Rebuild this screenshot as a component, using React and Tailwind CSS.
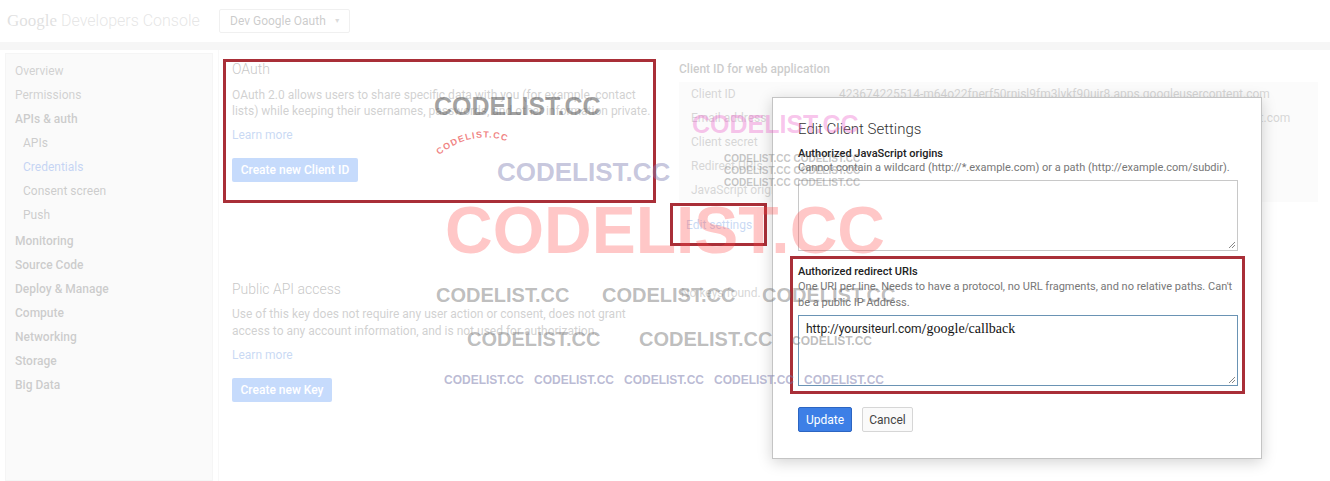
import React from "react";

const sideItems = [
    { label: "Overview", kind: "top" },
    { label: "Permissions", kind: "top" },
    { label: "APIs & auth", kind: "head" },
    { label: "APIs", kind: "sub" },
    { label: "Credentials", kind: "active" },
    { label: "Consent screen", kind: "sub" },
    { label: "Push", kind: "sub" },
    { label: "Monitoring", kind: "head", gap: true },
    { label: "Source Code", kind: "head" },
    { label: "Deploy & Manage", kind: "head" },
    { label: "Compute", kind: "head" },
    { label: "Networking", kind: "head" },
    { label: "Storage", kind: "head" },
    { label: "Big Data", kind: "head" },
];

const clientRows = [
    ["Client ID", "423674225514-m64o22fnerf50rnisl9fm3lvkf90uir8.apps.googleusercontent.com"],
    ["Email address", "423674225514-m64o22fnerf50rnisl9fm3lvkf90uir8@developer.gserviceaccount.com"],
    ["Client secret", "Xk3fPq9aLm2Vn7RtB1cZ8wYd"],
    ["Redirect URIs", "http://yoursiteurl.com/google/callback"],
    ["JavaScript origins", "none"],
];

// watermark stamps sitting on top of the screenshot
const marks = [
    { x: 434, y: 94, cls: "text-[25px] text-[rgba(70,70,70,0.5)]" },
    { x: 497, y: 159, cls: "text-[26px] text-[rgba(130,130,180,0.45)]" },
    { x: 692, y: 112, cls: "text-[25px] text-[rgba(235,90,200,0.35)]" },
    { x: 445, y: 197, cls: "text-[66px] text-[rgba(255,70,70,0.3)]" },
    { x: 724, y: 154, cls: "text-[10px] text-[rgba(110,110,110,0.4)]", text: "CODELIST.CC CODELIST.CC" },
    { x: 724, y: 166, cls: "text-[10px] text-[rgba(110,110,110,0.4)]", text: "CODELIST.CC CODELIST.CC" },
    { x: 724, y: 178, cls: "text-[10px] text-[rgba(110,110,110,0.4)]", text: "CODELIST.CC CODELIST.CC" },
    { x: 436, y: 285, cls: "text-[20px] text-[rgba(110,110,110,0.45)]" },
    { x: 602, y: 285, cls: "text-[20px] text-[rgba(110,110,110,0.45)]" },
    { x: 762, y: 285, cls: "text-[20px] text-[rgba(110,110,110,0.45)]" },
    { x: 467, y: 329, cls: "text-[20px] text-[rgba(110,110,110,0.45)]" },
    { x: 639, y: 329, cls: "text-[20px] text-[rgba(110,110,110,0.45)]" },
    { x: 792, y: 335, cls: "text-[12px] text-[rgba(110,110,110,0.45)]" },
    { x: 444, y: 374, cls: "text-[12px] text-[rgba(120,120,170,0.5)]" },
    { x: 534, y: 374, cls: "text-[12px] text-[rgba(120,120,170,0.5)]" },
    { x: 624, y: 374, cls: "text-[12px] text-[rgba(120,120,170,0.5)]" },
    { x: 714, y: 374, cls: "text-[12px] text-[rgba(120,120,170,0.5)]" },
    { x: 804, y: 374, cls: "text-[12px] text-[rgba(120,120,170,0.5)]" },
];

const ResizeGrip = () => (
    <svg className="absolute right-[1px] bottom-[1px]" width="9" height="9" viewBox="0 0 9 9">
        <path d="M8 2 L2 8 M8 5 L5 8" stroke="#888" strokeWidth="1" />
    </svg>
);

const App = () => {
    return (
        <div className="relative w-[1330px] h-[481px] overflow-hidden bg-white font-['Roboto',sans-serif]">
            {/* header */}
            <div className="h-[42px] flex items-center">
                <div className="ml-[7px] flex items-baseline gap-[4px] w-[212px]">
                    <span className="text-[17px] text-[#999] font-['Liberation_Serif',serif]">Google</span>
                    <span className="text-[16px] font-light text-[#aaa]">Developers Console</span>
                </div>
                <div className="h-[24px] w-[131px] border border-[#ccc] rounded-[2px] flex items-center pl-[10px] gap-[8px] text-[12px] text-[#555] whitespace-nowrap">
                    Dev Google Oauth
                    <span className="text-[7px] text-[#888]">▼</span>
                </div>
            </div>
            <div className="h-[8px] bg-[#e2e2e2]" />

            <div className="flex">
                {/* sidebar */}
                <div className="ml-[5px] mt-[3px] w-[208px] h-[428px] bg-[#eeeeee] border border-[#dcdcdc] pt-[5px]">
                    {sideItems.map((it) => (
                        <div
                            key={it.label}
                            className={`h-[24px] flex items-center text-[12px] ${it.gap ? "mt-[2px]" : ""} ${
                                it.kind === "sub" || it.kind === "active" ? "pl-[17px]" : "pl-[9px]"
                            } ${
                                it.kind === "head"
                                    ? "font-medium text-[#555]"
                                    : it.kind === "active"
                                    ? "text-[#3b6fd6]"
                                    : it.kind === "top"
                                    ? "text-[#666]"
                                    : "text-[#555]"
                            }`}
                        >
                            {it.label}
                        </div>
                    ))}
                </div>

                {/* main */}
                <div className="ml-[5px] flex-1 border-l border-[#e6e6e6] h-[431px] flex">
                    <div className="w-[447px] pl-[13px] pt-[11px]">
                        <div className="text-[14px] font-light text-[#444] leading-[16px]">OAuth</div>
                        <p className="mt-[10px] text-[12px] leading-[16px] text-[#666] w-[420px] h-[32px] overflow-hidden">
                            OAuth 2.0 allows users to share specific data with you (for example, contact lists) while keeping their usernames, passwords, and other information private.
                        </p>
                        <div className="mt-[8px] text-[12px] leading-[16px] text-[#4a7fd8]">Learn more</div>
                        <div className="mt-[15px] w-[126px] h-[24px] bg-[#4285f4] rounded-[2px] text-white text-[12px] font-medium flex items-center justify-center">
                            Create new Client ID
                        </div>

                        <div className="mt-[99px] text-[14px] font-light text-[#444] leading-[16px]">Public API access</div>
                        <p className="mt-[9px] text-[12px] leading-[17px] text-[#666] w-[420px]">
                            Use of this key does not require any user action or consent, does not grant access to any account information, and is not used for authorization.
                        </p>
                        <div className="mt-[7px] text-[12px] leading-[16px] text-[#4a7fd8]">Learn more</div>
                        <div className="mt-[15px] w-[100px] h-[24px] bg-[#4285f4] rounded-[2px] text-white text-[12px] font-medium flex items-center justify-center">
                            Create new Key
                        </div>
                    </div>

                    <div className="flex-1 pt-[11px] pl-[13px] pr-[12px]">
                        <div className="text-[12px] font-medium text-[#555] leading-[16px]">Client ID for web application</div>
                        <div className="mt-[5px] bg-[#f1f1f1]">
                            {clientRows.map(([k, v]) => (
                                <div key={k} className="h-[24px] flex items-center text-[12px] text-[#777]">
                                    <span className="w-[160px] pl-[12px] shrink-0">{k}</span>
                                    <span className="whitespace-nowrap">{v}</span>
                                </div>
                            ))}
                        </div>
                        <div className="mt-[15px] pl-[7px] text-[12px] text-[#4a7fd8] leading-[16px]">Edit settings</div>
                        <div className="mt-[52px] pl-[2px] text-[12px] text-[#777] leading-[16px]">No keys found.</div>
                    </div>
                </div>
            </div>

            {/* dim backdrop */}
            <div className="absolute inset-0 bg-white/70" />

            {/* annotation boxes */}
            <div className="absolute left-[223px] top-[59px] w-[433px] h-[144px] border-[3px] border-[#a92f38]" />
            <div className="absolute left-[670px] top-[203px] w-[97px] h-[43px] border-[3px] border-[#a92f38]" />

            {/* modal */}
            <div className="absolute left-[772px] top-[97px] w-[490px] h-[362px] bg-white border border-[#c4c4c4] shadow-[0_3px_14px_rgba(0,0,0,0.18)] pl-[25px] pr-[24px] pt-[21px]">
                <div className="text-[15px] font-light text-[#333] leading-[20px]">Edit Client Settings</div>
                <div className="mt-[8px] text-[11px] font-medium text-[#222] leading-[14px]">Authorized JavaScript origins</div>
                <div className="text-[11px] text-[#777] leading-[14px] whitespace-nowrap">
                    Cannot contain a wildcard (http://*.example.com) or a path (http://example.com/subdir).
                </div>
                <div className="relative mt-[5px] w-[440px] h-[71px] border border-[#c8c8c8]">
                    <ResizeGrip />
                </div>
                <div className="mt-[5px] -ml-[8px] w-[455px] h-[138px] border-[3px] border-[#a92f38] pl-[5px] pt-[6px]">
                    <div className="text-[11px] font-medium text-[#222] leading-[14px]">Authorized redirect URIs</div>
                    <div className="text-[11px] text-[#777] leading-[16px] w-[444px]">
                        One URI per line. Needs to have a protocol, no URL fragments, and no relative paths. Can't be a public IP Address.
                    </div>
                    <div className="relative mt-[4px] w-[440px] h-[71px] border border-[#6a93b4] px-[7px] pt-[3px] leading-[18px]">
                        <span className="text-[12px] text-[#222]">http://yoursiteurl.com/</span>
                        <span className="text-[14px] text-[#111] font-['Liberation_Serif',serif]">google/callback</span>
                        <ResizeGrip />
                    </div>
                </div>
                <div className="mt-[13px] flex gap-[10px]">
                    <div className="w-[54px] h-[25px] bg-[#3d7fe6] border border-[#2c65c2] rounded-[2px] text-white text-[12px] flex items-center justify-center">Update</div>
                    <div className="w-[51px] h-[25px] bg-[#fafafa] border border-[#d6d6d6] rounded-[2px] text-[#444] text-[12px] flex items-center justify-center">Cancel</div>
                </div>
            </div>

            {/* watermarks */}
            {marks.map((m, i) => (
                <div
                    key={i}
                    className={`absolute pointer-events-none whitespace-nowrap font-bold leading-none font-['Liberation_Sans',sans-serif] ${m.cls}`}
                    style={{ left: m.x, top: m.y }}
                >
                    {m.text || "CODELIST.CC"}
                </div>
            ))}
            <svg className="absolute left-[435px] top-[127px] pointer-events-none" width="96" height="32" viewBox="0 0 96 32">
                <defs>
                    <path id="arc" d="M4 28 Q48 -6 94 26" fill="none" />
                </defs>
                <text fill="rgba(235,90,90,0.75)" fontSize="9" fontWeight="bold" fontFamily="Liberation Sans, sans-serif" letterSpacing="1.2">
                    <textPath href="#arc">CODELIST.CC</textPath>
                </text>
            </svg>
        </div>
    );
};

export default App;
